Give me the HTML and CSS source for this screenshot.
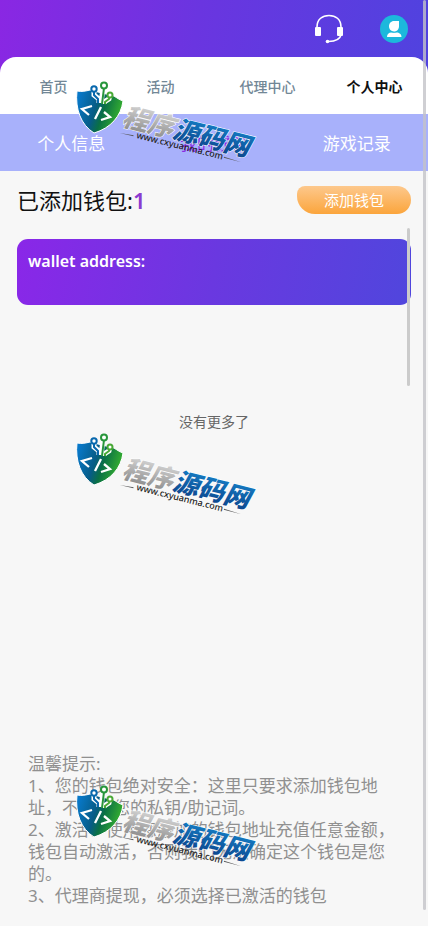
FILE: index.html
```html
<!DOCTYPE html>
<html lang="zh-CN">
<head>
  <meta charset="UTF-8" />
  <meta name="viewport" content="width=device-width, initial-scale=1.0"/>
  <title>我的钱包</title>
  <link rel="stylesheet" href="styles.css">
</head>
<body>
  <div class="page">
    <div class="top">
      <header class="header">
        <button type="button" class="icon-btn" aria-label="客服">
          <svg width="30" height="30" viewBox="0 0 30 30" fill="none" stroke="#fff">
            <path d="M3 13C3 5 8.500 1.500 15 1.500S27 5 27 13" stroke-width="1.600"/>
            <path d="M27 21c-1 4.500-5 6.200-12.500 6.600" stroke-width="1.500"/>
            <rect x="1" y="13" width="6" height="9" rx="1" fill="#fff" stroke="none"/>
            <rect x="23" y="13" width="6" height="9" rx="1" fill="#fff" stroke="none"/>
            <circle cx="13.500" cy="27.500" r="1.800" fill="#fff" stroke="none"/>
          </svg>
        </button>
        <button type="button" class="icon-btn" aria-label="账户">
          <svg width="28" height="28" viewBox="0 0 28 28">
            <circle cx="14" cy="14" r="14" fill="#1cb8dc"/>
            <path d="M14 6h5v5c0 3.400-2 5.500-5 5.500s-5-2.200-5-5.200S11 6 14 6z" fill="#fff"/>
            <path d="M7 22c0-3 1.800-4.500 4.500-4.500.8.500 4.200.500 5 0 2.700 0 5 1.500 5 4.500z" fill="#fff"/>
          </svg>
        </button>
      </header>
      <nav class="nav">
        <a href="#">首页</a>
        <a href="#">活动</a>
        <a href="#">代理中心</a>
        <a href="#" class="active">个人中心</a>
      </nav>
    </div>

    <nav class="subnav">
      <a href="#">个人信息</a>
      <a href="#" class="active">我的钱包</a>
      <a href="#">游戏记录</a>
    </nav>

    <main class="main">
      <div class="title-row">
        <h1>已添加钱包:<span class="count">1</span></h1>
        <button type="button" class="add-btn">添加钱包</button>
      </div>
      <div class="list">
        <div class="card">wallet address:</div>
        <div class="list-bar"></div>
      </div>
      <p class="empty">没有更多了</p>
    </main>

    <section class="tips">
      <p>温馨提示:</p>
      <p>1、您的钱包绝对安全：这里只要求添加钱包地址，不索取您的私钥/助记词。</p>
      <p>2、激活：使用您添加的钱包地址充值任意金额，钱包自动激活，否则我们无法确定这个钱包是您的。</p>
      <p>3、代理商提现，必须选择已激活的钱包</p>
    </section>

    <div class="page-bar"></div>

    <!-- watermark, defined once and repeated down the page -->
    <div class="marks">
      <svg width="190" height="92" viewBox="0 0 190 92">
        <defs>
          <linearGradient id="shield" x1="0" y1="0.300" x2="1" y2="0.600">
            <stop offset="0" stop-color="#0878c8"/>
            <stop offset="0.400" stop-color="#075c86"/>
            <stop offset="0.580" stop-color="#0a7045"/>
            <stop offset="1" stop-color="#3dba2c"/>
          </linearGradient>
          <linearGradient id="silver" x1="0" y1="0" x2="0" y2="1">
            <stop offset="0" stop-color="#e4e4e4"/>
            <stop offset="1" stop-color="#858585"/>
          </linearGradient>
          <linearGradient id="blue" x1="0" y1="0" x2="0" y2="1">
            <stop offset="0" stop-color="#1688cf"/>
            <stop offset="1" stop-color="#0b3f87"/>
          </linearGradient>
          <g id="mark">
            <path d="M5 13C10 14 14 13 18 12L42 18C45 20 48 22 51 23C49 38 39 50 22 55C9 47 3 31 5 13Z" fill="url(#shield)" stroke="#fff" stroke-width="1"/>
            <path d="M22 13L22 17L27 21V25M31 10L29 25M38 17L37 21L32 24V26" fill="none" stroke="#fff" stroke-width="5"/>
            <g fill="none" stroke-width="2">
              <path d="M22 13V17L26 21V25" stroke="#0868ad"/>
              <path d="M32 10L30 26" stroke="#27963b"/>
              <path d="M38 17L37 21L33 24V26" stroke="#49a936"/>
              <circle cx="22" cy="11" r="2.700" fill="#fff" stroke="#0868ad"/>
              <circle cx="32" cy="7.500" r="3" fill="#fff" stroke="#27963b"/>
              <circle cx="38" cy="17" r="2.500" fill="#fff" stroke="#49a936"/>
            </g>
            <path d="M20 28L10 31L17 37M29 29L23 41M32 34L38 39L29 42" fill="none" stroke="#fff" stroke-width="2.300"/>
            <g transform="translate(49 47) rotate(14)">
              <text class="mark-name" x="0" y="0"><tspan fill="url(#silver)">程序</tspan><tspan fill="url(#blue)">源码网</tspan></text>
            </g>
            <g transform="translate(64 60) rotate(14)">
              <text class="mark-url" x="0" y="0">www.cxyuanma.com</text>
              <path d="M-17 -1L-3 -2V-1ZM90 -2V-3L108 -2Z" fill="#555"/>
            </g>
          </g>
        </defs>
        <use href="#mark"/>
      </svg>
      <svg width="190" height="92" viewBox="0 0 190 92"><use href="#mark"/></svg>
      <svg width="190" height="92" viewBox="0 0 190 92"><use href="#mark"/></svg>
    </div>
  </div>
</body>
</html>
```
FILE: styles.css
```css
* { margin: 0; padding: 0; box-sizing: border-box; }
body {
  background: #f7f7f7;
  color: #111;
  font-family: "Noto Sans", "Noto Sans CJK SC", sans-serif;
}
a { text-decoration: none; color: inherit; }
button { border: 0; font-family: inherit; cursor: pointer; }
.page {
  position: relative;
  min-height: 100vh;
  display: flex;
  flex-direction: column;
}
.top {
  background: linear-gradient(100deg, #8a27e3, #6a35e0 45%, #4f43df);
}
.header {
  height: 57px;
  padding: 0 20px;
  display: flex;
  align-items: center;
  justify-content: flex-end;
  gap: 36px;
}
.icon-btn { background: none; display: flex; }
.nav {
  height: 57px;
  background: #fff;
  border-radius: 16px 16px 0 0;
  display: grid;
  grid-template-columns: repeat(4, 1fr);
  align-items: center;
  text-align: center;
  font-size: 14px;
  font-weight: 500;
  color: #728796;
}
.nav .active { color: #111; font-weight: 700; }
.subnav {
  height: 57px;
  background: #a8b1fb;
  color: #fff;
  display: grid;
  grid-template-columns: repeat(3, 1fr);
  align-items: center;
  text-align: center;
  font-size: 17px;
}
.subnav .active { color: #8a2be2; }
.main { padding: 0 17px; }
.title-row {
  height: 57px;
  display: flex;
  align-items: center;
  justify-content: space-between;
}
h1 {
  font-size: 22px;
  line-height: 32px;
  font-weight: 400;
}
.count { color: #8a3bd0; font-weight: 600; }
.add-btn {
  width: 114px;
  height: 28px;
  background: linear-gradient(#fdc88c, #fba53c);
  border-radius: 8px 14px 14px 18px;
  color: #fff;
  font-size: 15px;
  line-height: 28px;
}
.list {
  position: relative;
  height: 158px;
  padding-top: 11px;
}
.card {
  height: 66px;
  padding: 11px;
  background: linear-gradient(100deg, #8a27e8, #6a38e0 50%, #5046dd);
  border-radius: 11px;
  color: #fff;
  font-size: 16px;
  line-height: 22px;
  font-weight: 600;
}
.list-bar {
  position: absolute;
  top: 0;
  right: 1px;
  width: 3px;
  height: 100%;
  background: #cbcbcb;
  border-radius: 2px;
}
.empty {
  margin: 26px 0;
  text-align: center;
  font-size: 14px;
  line-height: 20px;
  color: #666;
}
.tips {
  margin-top: auto;
  padding: 0 28px 19px;
  font-size: 17px;
  line-height: 22px;
  color: #909090;
}
.page-bar {
  position: absolute;
  top: 0;
  right: 2px;
  bottom: 16px;
  width: 3px;
  background: rgba(195, 195, 200, 0.8);
  border-radius: 2px;
}
.marks {
  position: absolute;
  top: 78px;
  left: 72px;
  display: flex;
  flex-direction: column;
  gap: 260px;
  pointer-events: none;
}
.mark-name {
  font-family: "Noto Sans CJK SC", sans-serif;
  font-size: 26px;
  font-weight: 900;
  font-style: italic;
  stroke: #fff;
  stroke-width: 1px;
  paint-order: stroke;
}
.mark-url {
  font-family: "Noto Sans", sans-serif;
  font-size: 9px;
  font-weight: 500;
  fill: #222;
}
```
